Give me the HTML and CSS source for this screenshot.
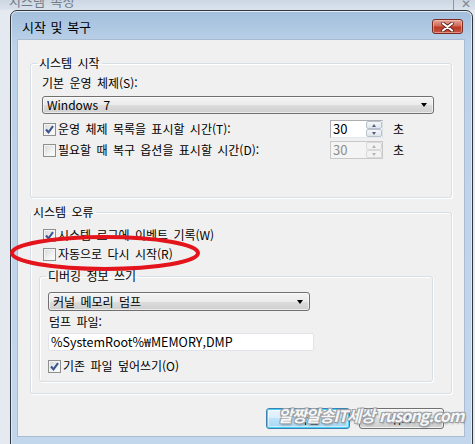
FILE: index.html
```html
<!DOCTYPE html>
<html lang="ko">
<head>
    <meta charset="UTF-8">
    <meta name="viewport" content="width=device-width, initial-scale=1.0">
    <title>시작 및 복구</title>
    <link rel="stylesheet" href="styles.css">
</head>
<body>
    <!-- parent window peeking out behind the dialog -->
    <div class="parent-bar">
        <span class="parent-title">시스템 속성</span>
        <span class="parent-close">✕</span>
    </div>

    <div class="window">
        <div class="titlebar">
            <span class="title">시작 및 복구</span>
            <span class="close-btn">
                <svg width="13" height="10" viewBox="0 0 13 10">
                    <path d="M2 1.5 L11 8.5 M11 1.5 L2 8.5" stroke="#5a1a14" stroke-width="3.6" stroke-linecap="round"/>
                    <path d="M2 1.5 L11 8.5 M11 1.5 L2 8.5" stroke="#ffffff" stroke-width="2.2" stroke-linecap="round"/>
                </svg>
            </span>
        </div>

        <div class="client">
            <fieldset class="group startup">
                <legend>시스템 시작</legend>
                <div class="group-body">
                    <div class="field-label">기본 운영 체제(S):</div>
                    <div class="select os-select">Windows 7<span class="arrow"></span></div>

                    <div class="timer-row first">
                        <label class="check-row">
                            <span class="checkbox">
                                <svg width="11" height="11" viewBox="0 0 11 11"><path d="M2 5.5 L4.5 8.3 L9 2.2" fill="none" stroke="#3b5591" stroke-width="2.1"/></svg>
                            </span>
                            운영 체제 목록을 표시할 시간(T):
                        </label>
                        <div class="spin">
                            <span class="spin-value">30</span>
                            <span class="spin-buttons"><span class="up"></span><span class="down"></span></span>
                        </div>
                        <span class="unit">초</span>
                    </div>

                    <div class="timer-row">
                        <label class="check-row">
                            <span class="checkbox"></span>
                            필요할 때 복구 옵션을 표시할 시간(D):
                        </label>
                        <div class="spin disabled">
                            <span class="spin-value">30</span>
                            <span class="spin-buttons"><span class="up"></span><span class="down"></span></span>
                        </div>
                        <span class="unit">초</span>
                    </div>
                </div>
            </fieldset>

            <fieldset class="group failure">
                <legend>시스템 오류</legend>
                <div class="group-body">
                    <label class="check-row indent">
                        <span class="checkbox">
                            <svg width="11" height="11" viewBox="0 0 11 11"><path d="M2 5.5 L4.5 8.3 L9 2.2" fill="none" stroke="#3b5591" stroke-width="2.1"/></svg>
                        </span>
                        시스템 로그에 이벤트 기록(W)
                    </label>
                    <label class="check-row indent second">
                        <span class="checkbox"></span>
                        자동으로 다시 시작(R)
                    </label>

                    <fieldset class="group debug">
                        <legend>디버깅 정보 쓰기</legend>
                        <div class="group-body">
                            <div class="select dump-select">커널 메모리 덤프<span class="arrow"></span></div>
                            <div class="field-label dump-label">덤프 파일:</div>
                            <div class="textbox">%SystemRoot%₩MEMORY,DMP</div>
                            <label class="check-row overwrite">
                                <span class="checkbox">
                                    <svg width="11" height="11" viewBox="0 0 11 11"><path d="M2 5.5 L4.5 8.3 L9 2.2" fill="none" stroke="#3b5591" stroke-width="2.1"/></svg>
                                </span>
                                기존 파일 덮어쓰기(O)
                            </label>
                        </div>
                    </fieldset>
                </div>
            </fieldset>

            <div class="buttons">
                <span class="btn default">확인</span>
                <span class="btn">취소</span>
            </div>
        </div>
    </div>

    <!-- red marker drawn over the screenshot -->
    <svg class="marker" width="192" height="38" viewBox="0 0 192 38">
        <ellipse cx="96" cy="19" rx="93" ry="16" fill="none" stroke="#e3141b" stroke-width="4"/>
    </svg>
    <div class="watermark">알짱알송IT세상 rusong.com</div>
</body>
</html>
```

FILE: styles.css
```css
* {
    box-sizing: border-box;
}

body {
    margin: 0;
    height: 444px;
    overflow: hidden;
    background: #e4eaf0;
    font-family: "Noto Sans CJK KR", "Noto Sans", sans-serif;
    font-size: 12px;
    line-height: 14px;
    word-spacing: 2px;
    color: #000;
}

/* --- parent window strip --- */
.parent-bar {
    height: 10px;
    display: flex;
    justify-content: space-between;
    overflow: hidden;
    background: linear-gradient(#ccd7e3, #dbe3ec);
    color: #6f7b87;
    font-size: 13px;
}
.parent-title {
    margin: -6px 0 0 9px;
}
.parent-close {
    margin: -4px 4px 0 0;
    padding-left: 7px;
    border-left: 1px solid #8b97a3;
    font-size: 12px;
    color: #7d8893;
}

/* --- dialog frame --- */
.window {
    margin-left: 10px;
    width: 463px;
    height: 440px;
    border: 1px solid #30363d;
    border-radius: 7px 7px 0 0;
    padding: 0 7px 0 6px;
    background: linear-gradient(#a3bfdc, #bcd2e9 34px, #c2d7ec);
    box-shadow: inset 0 1px 0 rgba(255, 255, 255, 0.7), inset 1px 0 0 rgba(255, 255, 255, 0.5), inset -1px 0 0 rgba(255, 255, 255, 0.5);
}

.titlebar {
    height: 28px;
    padding: 4px 2px 0 5px;
    display: flex;
    align-items: center;
    justify-content: space-between;
}
.title {
    font-size: 13px;
    word-spacing: 1px;
}
.close-btn {
    align-self: flex-start;
    margin-top: 4px;
    width: 31px;
    height: 15px;
    display: flex;
    align-items: center;
    justify-content: center;
    border: 1px solid #7a2a22;
    border-radius: 3px;
    background: linear-gradient(#e5a597, #cf6a55 45%, #b83a26 55%, #c4553f);
    box-shadow: inset 0 0 0 1px rgba(255, 210, 200, 0.5);
}

.client {
    height: 398px;
    padding: 16px 12px 0;
    background: #f0f0f0;
    border: 1px solid #a9bcd2;
}

/* --- group boxes --- */
.group {
    margin: 0;
    padding: 0;
    border: 1px solid #d5dfe5;
    border-radius: 3px;
    box-shadow: inset 1px 1px 0 #fff, 1px 1px 0 #fff;
}
.group legend {
    padding: 0 2px;
    line-height: 14px;
}

.startup {
    height: 142px;
}
.startup legend {
    margin-left: 6px;
}
.startup .group-body {
    padding: 6px 17px 0 11px;
}

.failure {
    margin-top: 7px;
    height: 189px;
}
.failure > .group-body {
    padding: 9px 18px 0 8px;
}

.debug {
    margin-top: 8px;
    height: 113px;
}
.debug legend {
    margin-left: 6px;
}
.debug .group-body {
    padding: 9px 0 0 8px;
}

/* --- controls --- */
.select {
    display: flex;
    align-items: center;
    padding: 0 6px 0 4px;
    border: 1px solid #707070;
    border-radius: 3px;
    background: linear-gradient(#f3f3f3, #ebebeb 50%, #dddddd 50%, #cfcfcf);
    box-shadow: inset 0 0 0 1px rgba(255, 255, 255, 0.6);
}
.select .arrow {
    margin-left: auto;
    border-top: 4px solid #000;
    border-left: 3.5px solid transparent;
    border-right: 3.5px solid transparent;
}
.os-select {
    margin-top: 6px;
    height: 18px;
}
.dump-select {
    width: 262px;
    height: 19px;
}

.timer-row {
    display: grid;
    grid-template-columns: 288px 53px auto;
    align-items: center;
    height: 18px;
    margin-top: 3px;
}
.timer-row.first {
    margin-top: 6px;
}

.check-row {
    display: flex;
    align-items: center;
    height: 14px;
}
.check-row.indent {
    margin-left: 4px;
}
.check-row.second {
    margin-top: 5px;
}
.check-row.overwrite {
    margin-top: 8px;
}
.timer-row .check-row {
    margin-left: 1px;
}

.checkbox {
    width: 13px;
    height: 13px;
    margin-right: 2px;
    flex: none;
    display: flex;
    align-items: center;
    justify-content: center;
    border: 1px solid #8e8f8f;
    background: linear-gradient(135deg, #d6d6d6, #f6f6f6 70%, #ffffff);
    box-shadow: inset 0 0 0 1px #f4f4f4;
}

.spin {
    display: flex;
    height: 18px;
    border: 1px solid #abadb3;
    border-right-color: #dbdfe6;
    border-bottom-color: #e3e9ef;
    background: #fff;
}
.spin-value {
    flex: 1;
    padding-left: 2px;
    font-size: 13px;
    line-height: 16px;
}
.spin-buttons {
    width: 16px;
    display: flex;
    flex-direction: column;
}
.spin-buttons span {
    flex: 1;
    display: flex;
    align-items: center;
    justify-content: center;
    border: 1px solid #b9c2cc;
    border-radius: 2px;
    background: linear-gradient(#f6f7f9, #dfe4ea);
}
.spin-buttons .up::before {
    content: '';
    border-bottom: 3px solid #4c5f82;
    border-left: 2.5px solid transparent;
    border-right: 2.5px solid transparent;
}
.spin-buttons .down::before {
    content: '';
    border-top: 3px solid #4c5f82;
    border-left: 2.5px solid transparent;
    border-right: 2.5px solid transparent;
}
.spin.disabled {
    border-color: #c8c8c8;
    background: #f4f4f4;
    color: #8d8d8d;
}
.spin.disabled .spin-buttons span {
    border-color: #d9d9d9;
    background: #f2f2f2;
}
.spin.disabled .up::before {
    border-bottom-color: #b4b4b4;
}
.spin.disabled .down::before {
    border-top-color: #b4b4b4;
}
.unit {
    margin-left: 10px;
}

.field-label.dump-label {
    margin-top: 4px;
    margin-left: 1px;
}

.textbox {
    width: 266px;
    height: 18px;
    margin-top: 4px;
    padding-left: 2px;
    border: 1px solid #e2e3ea;
    border-radius: 2px;
    background: #fff;
    font-size: 12.5px;
    line-height: 16px;
    word-spacing: 0;
}

/* --- dialog buttons --- */
.buttons {
    display: flex;
    justify-content: flex-end;
    gap: 9px;
    margin-top: 14px;
    padding-right: 8px;
}
.btn {
    width: 85px;
    height: 21px;
    display: flex;
    align-items: center;
    justify-content: center;
    border: 1px solid #707070;
    border-radius: 3px;
    background: linear-gradient(#f2f2f2, #ebebeb 50%, #dddddd 50%, #cfcfcf);
    box-shadow: inset 0 0 0 1px rgba(255, 255, 255, 0.7);
}
.btn.default {
    width: 84px;
    border-color: #3c7fb1;
    background: linear-gradient(#e9f5fc, #d8eefb 50%, #bde4fa 50%, #a6d6f2);
    box-shadow: inset 0 0 0 1px #48d2f8, inset 0 0 0 2px rgba(255, 255, 255, 0.5);
}

/* --- overlays drawn on the screenshot --- */
.marker {
    position: absolute;
    left: 9px;
    top: 234px;
}
.watermark {
    position: absolute;
    left: 278px;
    top: 405px;
    font-size: 16px;
    line-height: 20px;
    font-weight: bold;
    font-style: italic;
    letter-spacing: -0.9px;
    word-spacing: 1px;
    color: rgba(255, 255, 255, 0.92);
    text-shadow: 1px 1px 0 #9aa0a6, -1px -1px 0 #9aa0a6, 1px -1px 0 #9aa0a6, -1px 1px 0 #9aa0a6, 1px 2px 2px rgba(0, 0, 0, 0.25);
}
```
